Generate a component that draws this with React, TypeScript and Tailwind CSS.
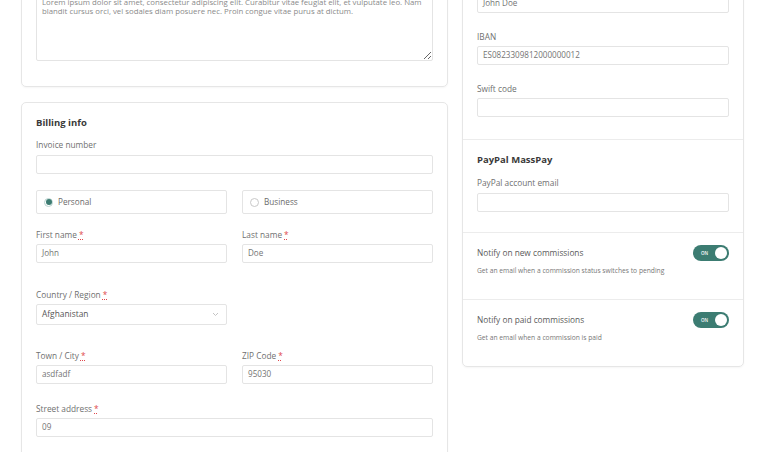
import React from 'react';

const font = { fontFamily: '"Open Sans", "Liberation Sans", sans-serif' };

function Req() {
  return <span className="ml-[2px] text-[#e0474c] underline decoration-dotted">*</span>;
}

function Label({ children, required }: { children: React.ReactNode; required?: boolean }) {
  return (
    <div className="h-[10px] text-[8.3px] leading-[10px] text-[#6f6f6f]">
      {children}
      {required && <Req />}
    </div>
  );
}

function Input({ value = '', className = '' }: { value?: string; className?: string }) {
  return (
    <div className={`mt-[4px] flex h-[19px] items-center rounded-[2px] border border-[#e4e4e4] bg-white px-[5px] text-[8.1px] text-[#747474] ${className}`}>
      {value}
    </div>
  );
}

function Toggle() {
  return (
    <div className="flex h-[16px] w-[36px] items-center justify-between rounded-full bg-[#3c7c72] pl-[8px] pr-[2px]">
      <span className="text-[4.5px] font-semibold text-white">ON</span>
      <span className="h-[12px] w-[12px] rounded-full bg-white" />
    </div>
  );
}

function Radio({ label, checked }: { label: string; checked?: boolean }) {
  return (
    <div className="flex h-[24px] items-center gap-[5px] rounded-[2px] border border-[#e4e4e4] px-[7px] text-[8.2px] text-[#6b6b6b]">
      {checked ? (
        <span className="flex h-[9px] w-[9px] items-center justify-center rounded-full border border-[#b9d3cf]">
          <span className="h-[6px] w-[6px] rounded-full bg-[#3c7c72]" />
        </span>
      ) : (
        <span className="h-[9px] w-[9px] rounded-full border border-[#c8c8c8] bg-white" />
      )}
      {label}
    </div>
  );
}

function Notify({ title, desc }: { title: string; desc: string }) {
  return (
    <div className="border-t border-[#ececec] px-[14px] pb-[24px] pt-[12px]">
      <div className="flex items-center justify-between">
        <div className="text-[8.3px] text-[#5a5a5a]">{title}</div>
        <Toggle />
      </div>
      <div className="mt-[6px] h-[8px] text-[6.7px] leading-[8px] text-[#777]">{desc}</div>
    </div>
  );
}

export default function App() {
  return (
    <div className="h-[452px] overflow-hidden bg-white" style={font}>
      <div className="-mt-[40px] grid grid-cols-[427px_282px] items-start gap-[14px] pl-[21px]">
        {/* Left column */}
        <div className="flex flex-col gap-[15px]">
          <div className="rounded-[5px] border border-[#e6e6e6] px-[14px] pb-[25px] pt-[15px] shadow-[0_1px_2px_rgba(0,0,0,0.04)]">
            <textarea
              readOnly
              className="block h-[85px] w-full resize-y rounded-[2px] border border-[#e4e4e4] px-[5px] pt-[21px] text-[7.8px] leading-[9px] text-[#8a8a8a] outline-none"
              value="Lorem ipsum dolor sit amet, consectetur adipiscing elit. Curabitur vitae feugiat elit, et vulputate leo. Nam blandit cursus orci, vel sodales diam posuere nec. Proin congue vitae purus at dictum."
            />
          </div>

          <div className="rounded-[5px] border border-[#e6e6e6] px-[14px] pb-[30px] pt-[14px] shadow-[0_1px_2px_rgba(0,0,0,0.04)]">
            <div className="h-[12px] text-[9.5px] font-bold leading-[12px] text-[#3a3a3a]">Billing info</div>
            <div className="mt-[11px]">
              <Label>Invoice number</Label>
              <Input className="mt-[5px]" />
            </div>
            <div className="mt-[16px] grid grid-cols-2 gap-[15px]">
              <Radio label="Personal" checked />
              <Radio label="Business" />
            </div>
            <div className="mt-[16px] grid grid-cols-2 gap-[15px]">
              <div>
                <Label required>First name</Label>
                <Input value="John" />
              </div>
              <div>
                <Label required>Last name</Label>
                <Input value="Doe" />
              </div>
            </div>
            <div className="mt-[27px] grid grid-cols-2 gap-[15px]">
              <div>
                <Label required>Country / Region</Label>
                <div className="mt-[4px] flex h-[21px] items-center justify-between rounded-[2px] border border-[#e4e4e4] pl-[5px] pr-[7px] text-[8.4px] text-[#555]">
                  Afghanistan
                  <svg width="7" height="5" viewBox="0 0 7 5" fill="none">
                    <path d="M1 1l2.5 2.5L6 1" stroke="#c4c4c4" strokeWidth="1" />
                  </svg>
                </div>
              </div>
            </div>
            <div className="mt-[26px] grid grid-cols-2 gap-[15px]">
              <div>
                <Label required>Town / City</Label>
                <Input value="asdfadf" />
              </div>
              <div>
                <Label required>ZIP Code</Label>
                <Input value="95030" />
              </div>
            </div>
            <div className="mt-[20px]">
              <Label required>Street address</Label>
              <Input value="09" />
            </div>
          </div>
        </div>

        {/* Right column */}
        <div className="rounded-[5px] border border-[#e6e6e6] shadow-[0_1px_2px_rgba(0,0,0,0.04)]">
          <div className="px-[14px] pb-[22px] pt-[15px]">
            <div>
              <Label>Account holder name</Label>
              <Input value="John Doe" className="mt-[8px]" />
            </div>
            <div className="mt-[19px]">
              <Label>IBAN</Label>
              <Input value="ES0823309812000000012" />
            </div>
            <div className="mt-[19px]">
              <Label>Swift code</Label>
              <Input />
            </div>
          </div>
          <div className="border-t border-[#ececec] px-[14px] pb-[20px] pt-[14px]">
            <div className="h-[12px] text-[9.5px] font-bold leading-[12px] text-[#3a3a3a]">PayPal MassPay</div>
            <div className="mt-[12px]">
              <Label>PayPal account email</Label>
              <Input className="mt-[5px]" />
            </div>
          </div>
          <Notify title="Notify on new commissions" desc="Get an email when a commission status switches to pending" />
          <Notify title="Notify on paid commissions" desc="Get an email when a commission is paid" />
        </div>
      </div>
    </div>
  );
}
